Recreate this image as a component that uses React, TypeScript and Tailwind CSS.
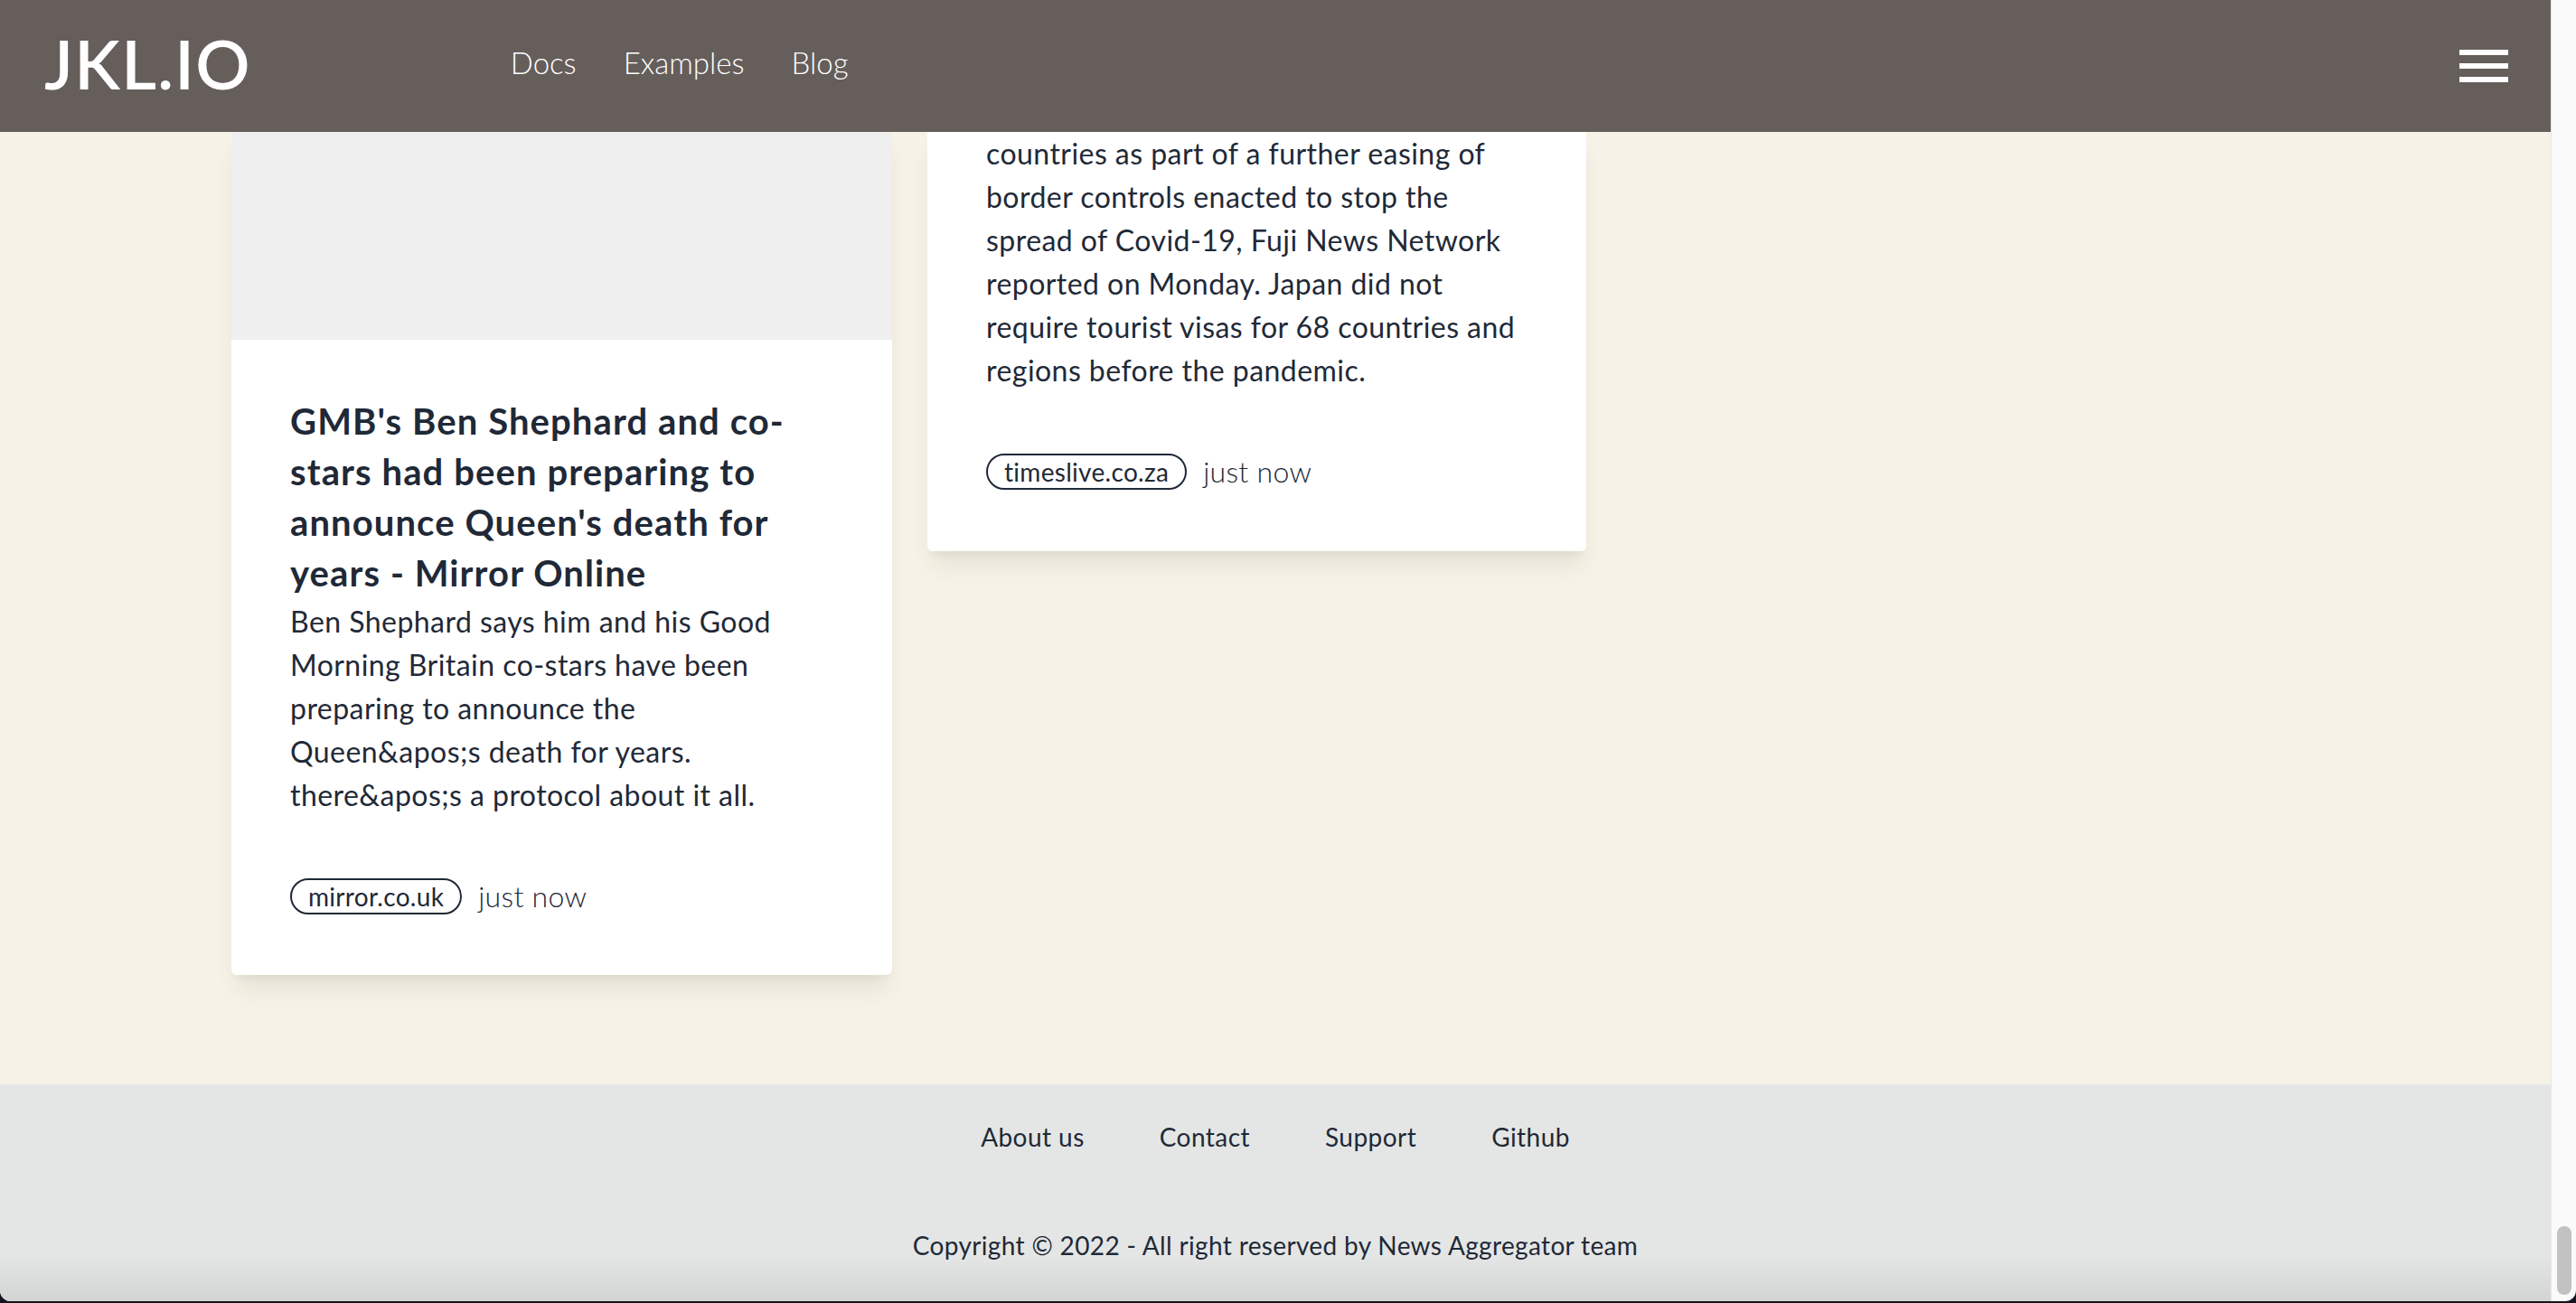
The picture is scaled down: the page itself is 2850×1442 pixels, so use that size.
import React from "react";

function Pill({ children }: { children: React.ReactNode }) {
  return (
    <span className="inline-flex h-[40px] items-center rounded-full border-2 border-[#1f2937] px-[18px] text-[28px] leading-none tracking-[0.3px] text-[#1f2937]">
      {children}
    </span>
  );
}

function MetaRow({ source }: { source: string }) {
  return (
    <div className="mt-[64px] flex h-[48px] items-center gap-[18px]">
      <Pill>{source}</Pill>
      <span className="text-[32px] font-light leading-[48px] tracking-[0.3px] text-[#1f2937]">just now</span>
    </div>
  );
}

function Lines({ lines, className }: { lines: string[]; className: string }) {
  return (
    <div className={className}>
      {lines.map((l) => (
        <span key={l} className="block whitespace-nowrap">
          {l}
        </span>
      ))}
    </div>
  );
}

export default function App() {
  return (
    <div className="h-[1442px] w-full overflow-hidden bg-[#14141e] font-['Lato',sans-serif]">
      <div className="flex h-[1440px] w-full overflow-hidden rounded-b-[12px]">
        {/* main column */}
        <div className="flex min-w-0 flex-1 flex-col bg-[#f6f2e7]">
          {/* header */}
          <header className="relative z-10 flex h-[146px] shrink-0 items-center bg-[#655e5b] pb-[6px] pl-[49px] pr-[47px]">
            <span className="text-[75px] font-semibold leading-none tracking-[1.3px] text-white">JKL.IO</span>
            <nav className="ml-[287px] flex items-center gap-[52px] text-[33px] font-light text-white">
              <span>Docs</span>
              <span>Examples</span>
              <span>Blog</span>
            </nav>
            <div className="ml-auto mt-[6px] flex w-[54px] flex-col gap-[9px]">
              <span className="block h-[6px] w-full bg-white" />
              <span className="block h-[6px] w-full bg-white" />
              <span className="block h-[6px] w-full bg-white" />
            </div>
          </header>

          {/* content */}
          <main className="flex h-[1054px] shrink-0 items-start gap-[39px] overflow-hidden pl-[256px]">
            {/* card 1 */}
            <article className="w-[731px] overflow-hidden rounded-b-[6px] bg-white shadow-[0_20px_25px_-5px_rgba(60,50,20,0.08),0_8px_10px_-6px_rgba(60,50,20,0.08)]">
              <div className="h-[230px] bg-[#efefef]" />
              <div className="px-[65px] pb-[63px] pt-[62px]">
                <Lines
                  className="text-[40px] font-bold leading-[56px] tracking-[1.1px] text-[#1f2937]"
                  lines={[
                    "GMB's Ben Shephard and co-",
                    "stars had been preparing to",
                    "announce Queen's death for",
                    "years - Mirror Online",
                  ]}
                />
                <Lines
                  className="mt-[2px] text-[32px] leading-[48px] tracking-[0.45px] text-[#1f2937]"
                  lines={[
                    "Ben Shephard says him and his Good",
                    "Morning Britain co-stars have been",
                    "preparing to announce the",
                    "Queen&apos;s death for years.",
                    "there&apos;s a protocol about it all.",
                  ]}
                />
                <MetaRow source="mirror.co.uk" />
              </div>
            </article>

            {/* card 2 */}
            <article className="w-[729px] overflow-hidden rounded-b-[6px] bg-white shadow-[0_20px_25px_-5px_rgba(60,50,20,0.08),0_8px_10px_-6px_rgba(60,50,20,0.08)]">
              <div className="px-[65px] pb-[64px]">
                <Lines
                  className="text-[32px] leading-[48px] tracking-[0.45px] text-[#1f2937]"
                  lines={[
                    "countries as part of a further easing of",
                    "border controls enacted to stop the",
                    "spread of Covid-19, Fuji News Network",
                    "reported on Monday. Japan did not",
                    "require tourist visas for 68 countries and",
                    "regions before the pandemic.",
                  ]}
                />
                <MetaRow source="timeslive.co.za" />
              </div>
            </article>
          </main>

          {/* footer */}
          <footer className="relative flex flex-1 flex-col items-center bg-[#e4e6e5] pt-[38px] text-[28px] leading-[40px] text-[#1f2937]">
            <div className="flex items-center gap-[83px] tracking-[0.45px]">
              <span>About us</span>
              <span>Contact</span>
              <span>Support</span>
              <span>Github</span>
            </div>
            <p className="mt-[80px] tracking-[0.35px]">Copyright © 2022 - All right reserved by News Aggregator team</p>
            <div className="pointer-events-none absolute inset-x-0 bottom-0 h-[50px] bg-gradient-to-b from-transparent to-[rgba(0,0,0,0.08)]" />
          </footer>
        </div>

        {/* scrollbar */}
        <div className="flex w-[28px] shrink-0 flex-col border-l border-[#e6e6e6] bg-[#fafafa]">
          <div className="mx-auto mb-[7px] mt-auto h-[76px] w-[16px] rounded-full bg-[#c2c2c2]" />
        </div>
      </div>
    </div>
  );
}
